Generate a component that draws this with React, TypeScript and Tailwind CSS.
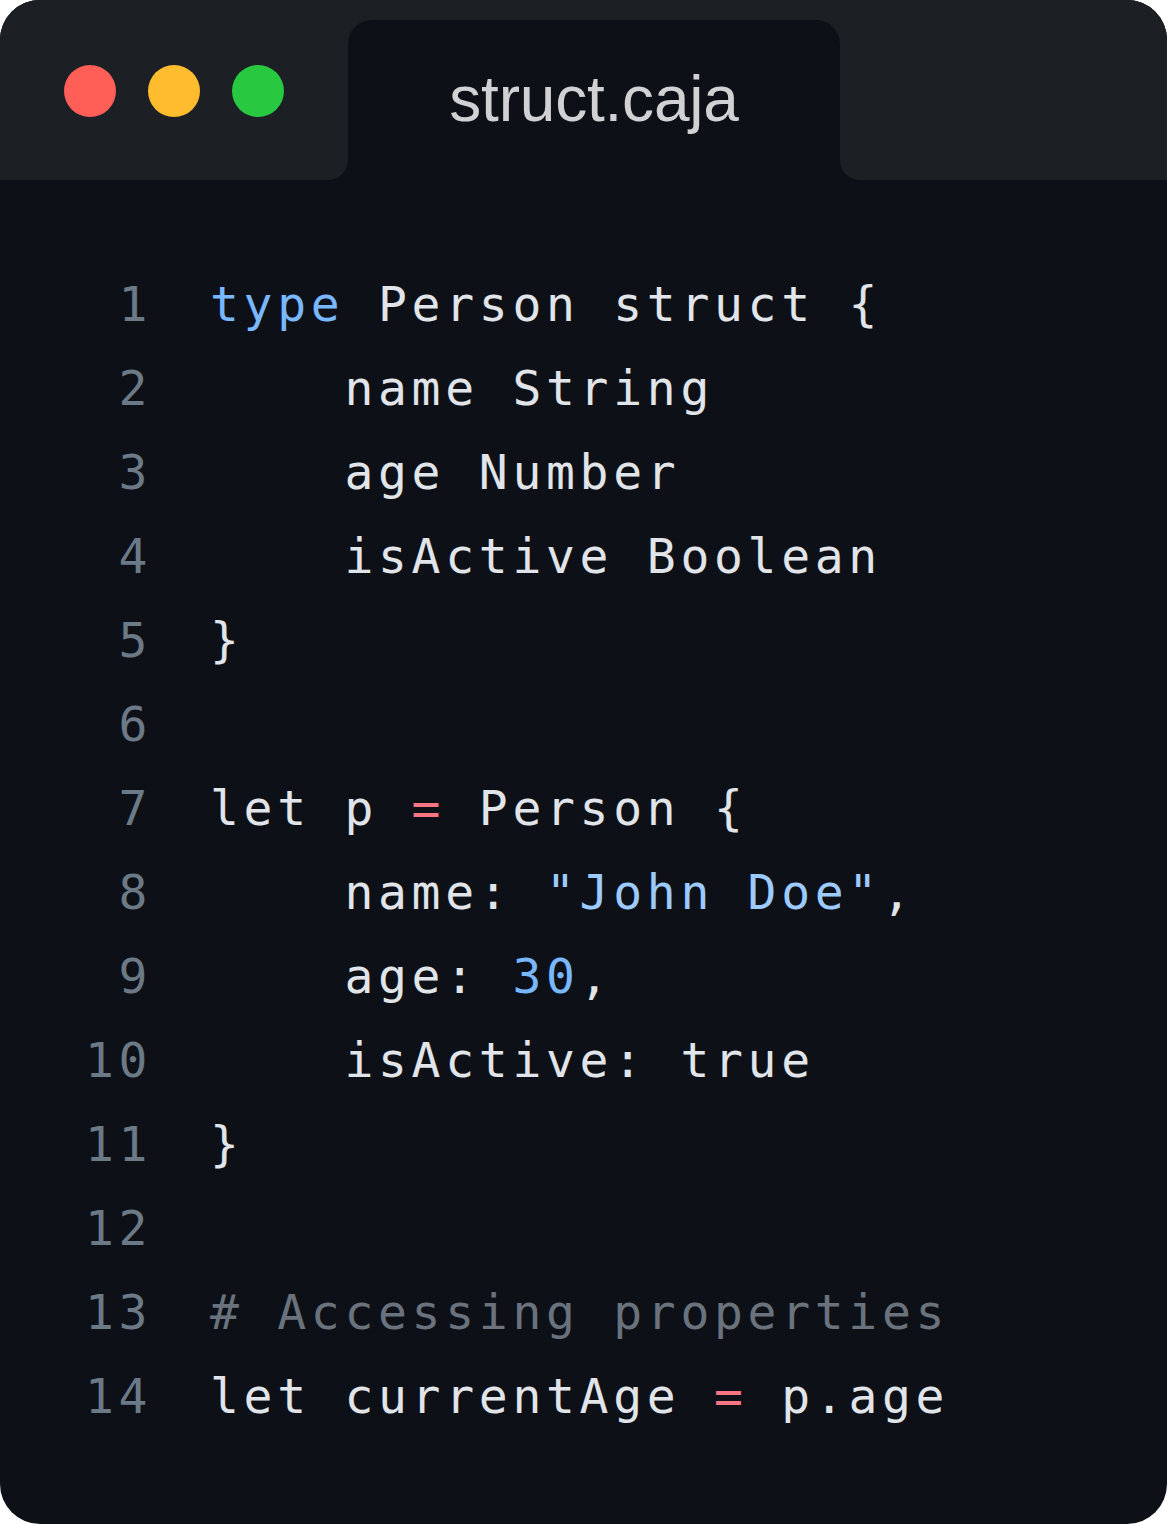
type Token = { t: string; c?: string };

const TEXT = "text-[#e1e4e8]";
const KEY = "text-[#79b8ff]";
const STR = "text-[#9ecbff]";
const OP = "text-[#f97583]";
const COMMENT = "text-[#6a737d]";

const lines: Token[][] = [
  [{ t: "type", c: KEY }, { t: " Person struct {" }],
  [{ t: "    name String" }],
  [{ t: "    age Number" }],
  [{ t: "    isActive Boolean" }],
  [{ t: "}" }],
  [],
  [{ t: "let p " }, { t: "=", c: OP }, { t: " Person {" }],
  [{ t: "    name: " }, { t: '"John Doe"', c: STR }, { t: "," }],
  [{ t: "    age: " }, { t: "30", c: KEY }, { t: "," }],
  [{ t: "    isActive: true" }],
  [{ t: "}" }],
  [],
  [{ t: "# Accessing properties", c: COMMENT }],
  [{ t: "let currentAge " }, { t: "=", c: OP }, { t: " p.age" }],
];

export default function App() {
  return (
    <div className="w-[1168px] h-[1524px] bg-white">
      <div className="w-[1167px] h-[1524px] rounded-[40px] overflow-hidden bg-[#0d1117] flex flex-col">
        {/* title bar */}
        <div className="flex h-[180px] bg-[#0d1117]">
          <div className="w-[348px] bg-[#1c1f24] rounded-br-[20px] flex items-center gap-8 pl-[64px] pt-[2px]">
            <span className="w-[52px] h-[52px] rounded-full bg-[#ff5f57]" />
            <span className="w-[52px] h-[52px] rounded-full bg-[#febc2e]" />
            <span className="w-[52px] h-[52px] rounded-full bg-[#28c840]" />
          </div>
          <div className="w-[492px] bg-[#1c1f24]">
            <div className="mt-[20px] h-[160px] bg-[#0d1117] rounded-t-[24px] flex items-center justify-center">
              <span
                className="text-[64px] text-[#d1d1d4] tracking-[-0.2px] -mt-[2px]"
                style={{ fontFamily: '"Liberation Sans", Arial, sans-serif' }}
              >
                struct.caja
              </span>
            </div>
          </div>
          <div className="flex-1 bg-[#1c1f24] rounded-bl-[20px]" />
        </div>

        {/* code */}
        <div
          className="pt-[82px] pl-[85px] text-[48px] leading-[84px] tracking-[4.7px] whitespace-pre"
          style={{ fontFamily: '"DejaVu Sans Mono", "Liberation Mono", monospace' }}
        >
          {lines.map((line, i) => (
            <div key={i} className="flex">
              <span className="w-[67px] text-right text-[#6b7a86]">{i + 1}</span>
              <span className={`ml-[58px] ${TEXT}`}>
                {line.map((tok, j) => (
                  <span key={j} className={tok.c}>
                    {tok.t}
                  </span>
                ))}
                {line.length === 0 ? " " : null}
              </span>
            </div>
          ))}
        </div>
      </div>
    </div>
  );
}
